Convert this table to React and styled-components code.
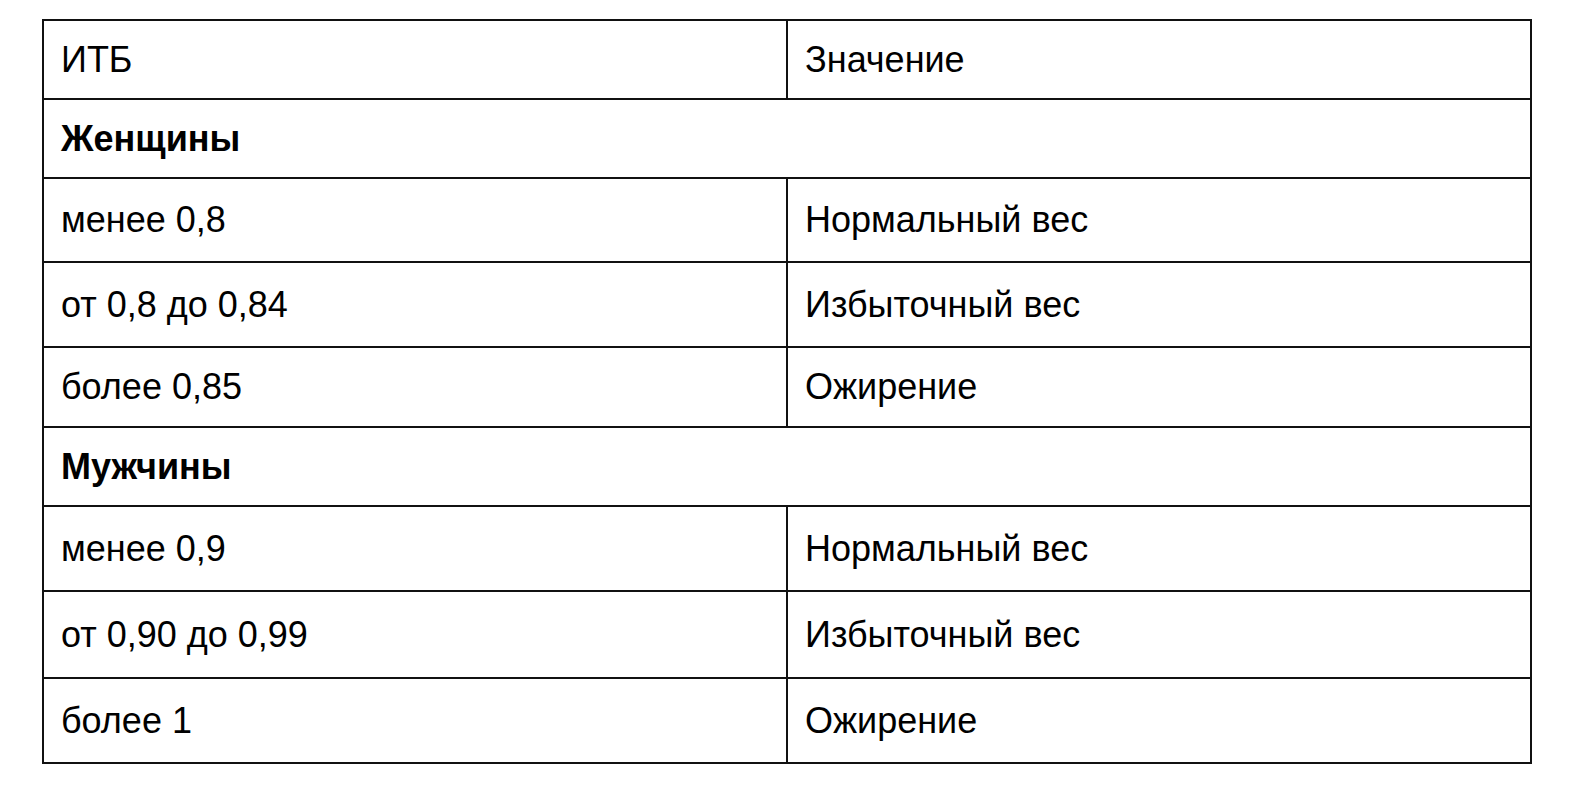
import React from "react";
import styled, { createGlobalStyle } from "styled-components";

const rows = [
  { a: "ИТБ", b: "Значение", h: 77 },
  { a: "Женщины", h: 77, group: true },
  { a: "менее 0,8", b: "Нормальный вес", h: 82 },
  { a: "от 0,8 до 0,84", b: "Избыточный вес", h: 83 },
  { a: "более 0,85", b: "Ожирение", h: 78 },
  { a: "Мужчины", h: 77, group: true },
  { a: "менее 0,9", b: "Нормальный вес", h: 83 },
  { a: "от 0,90 до 0,99", b: "Избыточный вес", h: 85 },
  { a: "более 1", b: "Ожирение", h: 83 },
];

const GlobalStyle = createGlobalStyle`
  html, body {
    margin: 0;
    background: #ffffff;
  }
  body {
    font-family: "Liberation Sans", Arial, sans-serif;
    color: #000;
  }
`;

const Page = styled.div`
  padding: 19px 0 0 42px;
`;

const Table = styled.div`
  width: 1490px;
  box-sizing: border-box;
  border: 2px solid #111;
  display: flex;
  flex-direction: column;
`;

const Row = styled.div`
  display: grid;
  grid-template-columns: ${(p) => (p.$group ? "1fr" : "742px 1fr")};
  height: ${(p) => p.$h}px;
  & + & {
    border-top: 2px solid #111;
  }
`;

const Cell = styled.div`
  display: flex;
  align-items: center;
  padding: 0 16px 0 17px;
  font-size: 36px;
  font-weight: ${(p) => (p.$bold ? 700 : 400)};
  & + & {
    border-left: 2px solid #111;
  }
`;

export default function App() {
  return (
    <>
      <GlobalStyle />
      <Page>
        <Table>
          {rows.map((r, i) => (
            <Row key={i} $h={r.h} $group={r.group}>
              {r.group ? (
                <Cell $bold>{r.a}</Cell>
              ) : (
                <>
                  <Cell>{r.a}</Cell>
                  <Cell>{r.b}</Cell>
                </>
              )}
            </Row>
          ))}
        </Table>
      </Page>
    </>
  );
}
